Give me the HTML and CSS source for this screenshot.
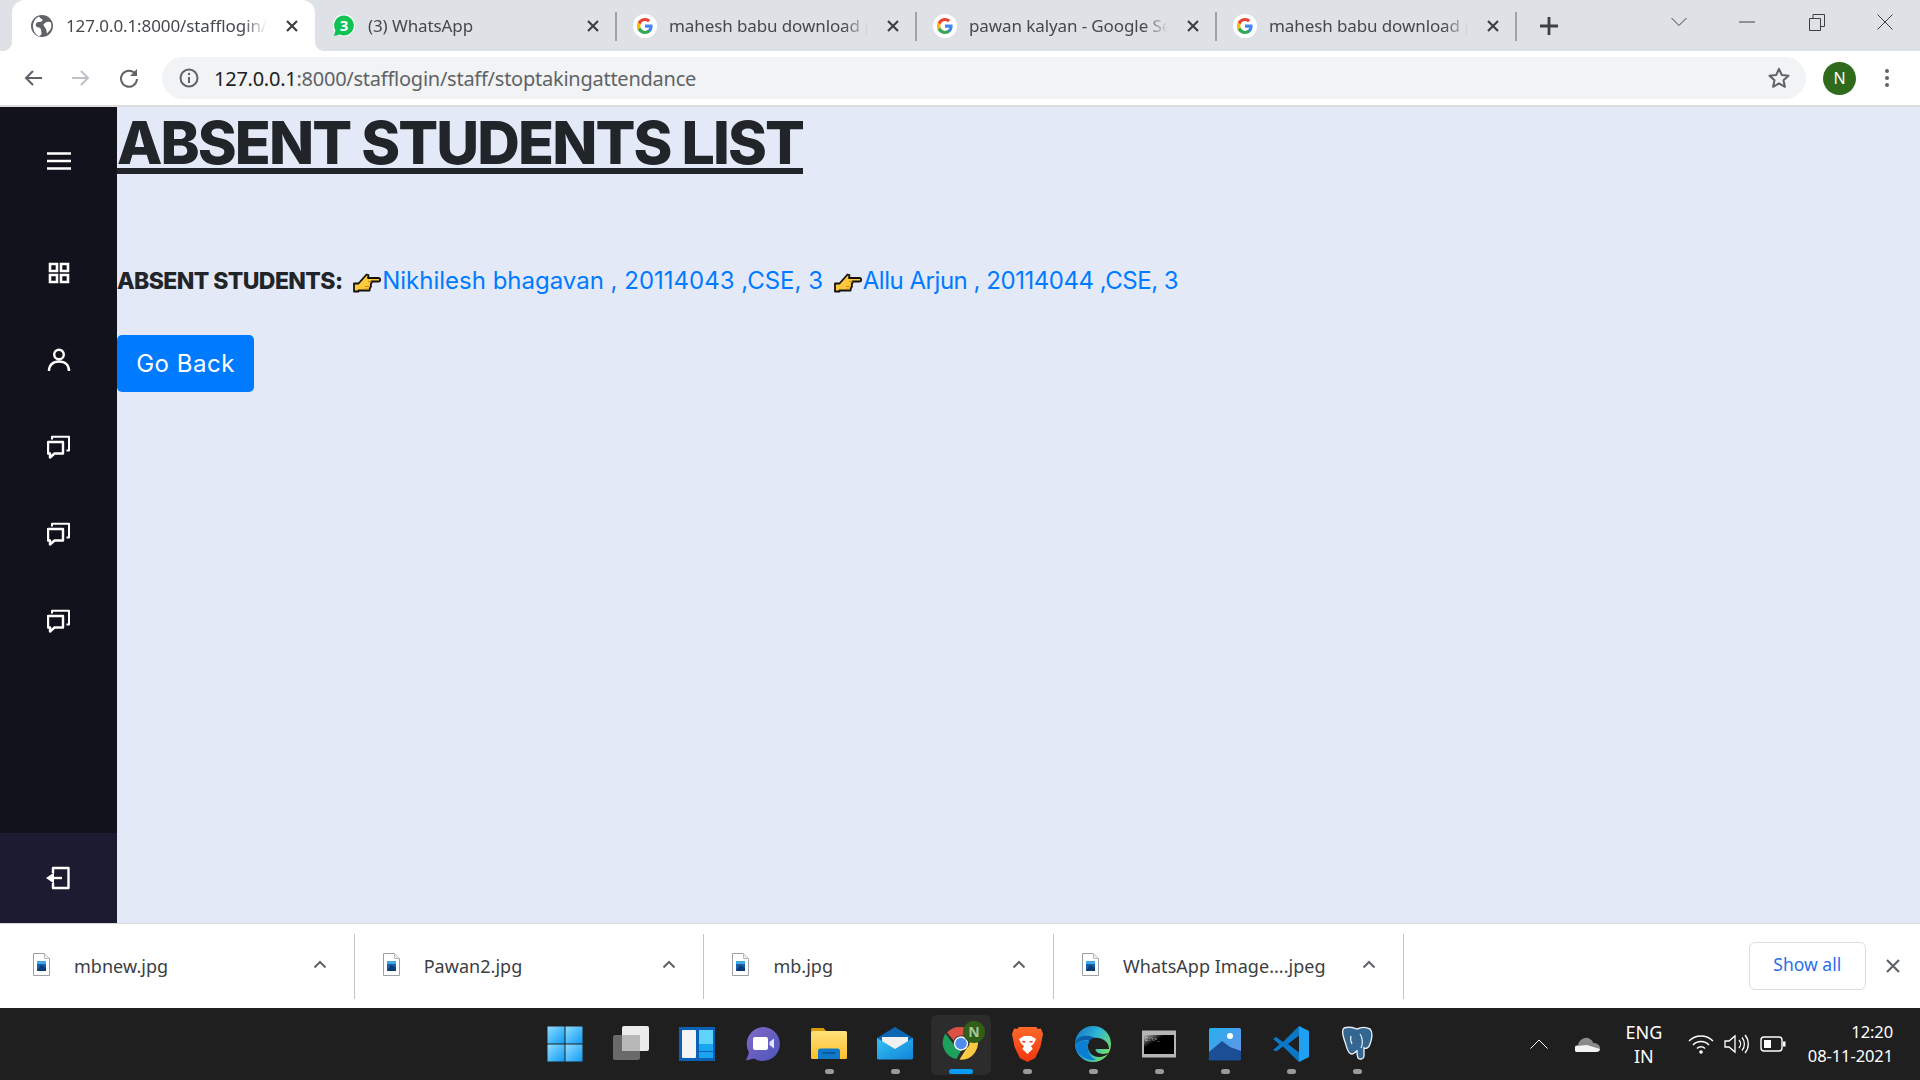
FILE: index.html
```html
<!DOCTYPE html>
<html lang="en">
<head>
<meta charset="utf-8">
<title>Absent students list</title>
<link rel="stylesheet" href="styles.css">
</head>
<body>
<svg class="defs" aria-hidden="true">
  <defs>
    <linearGradient id="gWin" x1="0" y1="0" x2="1" y2="1"><stop offset="0" stop-color="#8fdcff"/><stop offset="1" stop-color="#0f9bf5"/></linearGradient>
    <linearGradient id="gTeams" x1="0" y1="0" x2="1" y2="1"><stop offset="0" stop-color="#8169c4"/><stop offset="1" stop-color="#4d55bd"/></linearGradient>
    <linearGradient id="gFolder" x1="0" y1="0" x2="0" y2="1"><stop offset="0" stop-color="#ffe27a"/><stop offset="1" stop-color="#fdbe2b"/></linearGradient>
    <linearGradient id="gMail" x1="0" y1="0" x2="1" y2="1"><stop offset="0" stop-color="#35c0f5"/><stop offset="1" stop-color="#1184d8"/></linearGradient>
    <linearGradient id="gBrave" x1="0" y1="0" x2="0" y2="1"><stop offset="0" stop-color="#ff6a2a"/><stop offset="1" stop-color="#f0350f"/></linearGradient>
    <linearGradient id="gEdge" x1="0" y1="0" x2="1" y2="0.6"><stop offset="0" stop-color="#0f6fc6"/><stop offset="0.55" stop-color="#2fb6d6"/><stop offset="1" stop-color="#6fdc6a"/></linearGradient>
    <linearGradient id="gPhoto" x1="0" y1="0" x2="1" y2="1"><stop offset="0" stop-color="#22b0ee"/><stop offset="1" stop-color="#6f8fe8"/></linearGradient>
    <linearGradient id="gCmd" x1="0" y1="0" x2="1" y2="1"><stop offset="0" stop-color="#b9b9b9"/><stop offset="0.35" stop-color="#000"/></linearGradient>
    <symbol id="gicon" viewBox="0 0 24 24">
      <circle cx="12" cy="12" r="12" fill="#fff"/>
      <path d="M19.6 12.2c0-.6-.1-1.1-.2-1.6H12v3.1h4.3c-.2 1-.8 1.8-1.6 2.4v2h2.6c1.5-1.4 2.3-3.4 2.3-5.9z" fill="#4285f4"/>
      <path d="M12 20c2.2 0 4-.7 5.3-1.9l-2.6-2c-.7.5-1.6.8-2.7.8-2.1 0-3.9-1.4-4.5-3.3H4.8v2.1C6.1 18.2 8.8 20 12 20z" fill="#34a853"/>
      <path d="M7.5 13.6c-.3-1-.3-2.2 0-3.2V8.3H4.8c-1.1 2.2-1.1 5.2 0 7.4z" fill="#fbbc05"/>
      <path d="M12 7.1c1.2 0 2.2.4 3 1.2l2.3-2.3C15.9 4.7 14.1 4 12 4 8.8 4 6.100 5.800 4.800 8.300l2.700 2.100c.6-1.900 2.400-3.300 4.500-3.300z" fill="#ea4335"/>
    </symbol>
    <symbol id="xicon" viewBox="0 0 14 14"><path d="M2 2l10 10M12 2L2 12" fill="none" stroke="#3c4043" stroke-width="2.200"/></symbol>
    <symbol id="chaticon" viewBox="1 0 24 24"><path d="M2 7h15v11.500H8.500L4 22.500v-4H2z" fill="none" stroke="#fff" stroke-width="2.400" stroke-linejoin="round"/><path d="M6 4.500V1.800h17v13.700h-2.500" fill="none" stroke="#fff" stroke-width="2" stroke-linejoin="round"/></symbol>
    <symbol id="docicon" viewBox="0 0 17 23"><path d="M.5.500h11l5 5v17H.5z" fill="#fff" stroke="#9aa0a6"/><path d="M11.500.500v5h5" fill="#eee" stroke="#bbb"/><rect x="4" y="8" width="9" height="10" fill="#1a5fa8"/><path d="M4 18l4-6 5 3v3z" fill="#0b3c78"/><rect x="4" y="8" width="9" height="3" fill="#3fa9e8"/></symbol>
    <symbol id="upicon" viewBox="0 0 14 9"><path d="M1.500 7.500L7 2l5.500 5.500" fill="none" stroke="#5f6368" stroke-width="2"/></symbol>
    <symbol id="handicon" viewBox="0 0 28 20"><path d="M1 10.500h4.500L10 5.500 13.500 1.500l2 .5-.5 3h10.500a1.700 1.700 0 0 1 0 3.500H18.500v1.500l-.8 1.500.3 2-1 1.500-.5 2.500H5.500V18.500H1z" fill="#ffc83d" stroke="#111" stroke-width="1.800" stroke-linejoin="round"/><path d="M15 8.500h3.500M12 13.500h4M12 16h3.500" fill="none" stroke="#c98a12" stroke-width="1"/></symbol>
  </defs>
</svg>

<header class="tabstrip">
  <div class="tab active">
    <svg class="favicon" viewBox="0 0 24 24"><circle cx="12" cy="12" r="11" fill="#5f6368"/><path d="M9 2.500c1 2 3 2 3.500 3.500S10 8 8.500 8 5 10 6 12s3.500 1 4.500 2.500.5 3 1 4.500-1.500 3-3 3C5 20 3 16 3 12s2.500-8 6-9.500zM15 9c2-1.500 4-1.500 6-.5.5 2 .5 4 0 6-1.500 2-2.500 3.500-4 5-.5-2-.5-3-1-4.500S13.500 12 13.500 11 14 9.500 15 9z" fill="#fff"/></svg>
    <span class="tab-title">127.0.0.1:8000/stafflogin/s</span>
    <svg class="tab-x"><use href="#xicon"/></svg>
  </div>
  <div class="tab sep">
    <svg class="favicon" viewBox="0 0 24 24"><circle cx="12" cy="11.500" r="11" fill="#fff"/><path d="M12 1.500a10 10 0 0 0-8.600 15L2 22l5.700-1.400A10 10 0 1 0 12 1.500z" fill="#0fc254"/><text x="12" y="17" class="wa-num">3</text></svg>
    <span class="tab-title">(3) WhatsApp</span>
    <svg class="tab-x"><use href="#xicon"/></svg>
  </div>
  <div class="tab sep">
    <svg class="favicon"><use href="#gicon"/></svg>
    <span class="tab-title">mahesh babu download p</span>
    <svg class="tab-x"><use href="#xicon"/></svg>
  </div>
  <div class="tab sep">
    <svg class="favicon"><use href="#gicon"/></svg>
    <span class="tab-title">pawan kalyan - Google Se</span>
    <svg class="tab-x"><use href="#xicon"/></svg>
  </div>
  <div class="tab sep">
    <svg class="favicon"><use href="#gicon"/></svg>
    <span class="tab-title">mahesh babu download p</span>
    <svg class="tab-x"><use href="#xicon"/></svg>
  </div>
  <svg class="newtab" viewBox="0 0 18 18"><path d="M9 0v18M0 9h18" fill="none" stroke="#3c4043" stroke-width="2.800"/></svg>
  <div class="winctl">
    <div class="winbtn"><svg width="16" height="10" viewBox="0 0 16 10"><path d="M.5 1L8 8.500 15.500 1" fill="none" stroke="#3c4043"/></svg></div>
    <div class="winbtn"><svg width="16" height="2" viewBox="0 0 16 2"><path d="M0 1h16" stroke="#3c4043"/></svg></div>
    <div class="winbtn restore"><svg width="16" height="17" viewBox="0 0 16 17"><path d="M.5 4.500h11v12H.5zM4 4.500v-4h11.500v12h-4" fill="none" stroke="#3c4043"/></svg></div>
    <div class="winbtn"><svg width="16" height="16" viewBox="0 0 16 16"><path d="M.5.500l15 15M15.500.500l-15 15" fill="none" stroke="#3c4043"/></svg></div>
  </div>
</header>

<nav class="toolbar">
  <svg class="nav-ico" viewBox="0 0 20 20"><path d="M19 10H3M10 3l-7 7 7 7" fill="none" stroke="#5f6368" stroke-width="2"/></svg>
  <svg class="nav-ico" viewBox="0 0 20 20"><path d="M1 10h16M10 3l7 7-7 7" fill="none" stroke="#bdc1c6" stroke-width="2"/></svg>
  <svg class="nav-ico" viewBox="0 0 20 20"><path d="M16.500 6A8 8 0 1 0 18 11" fill="none" stroke="#5f6368" stroke-width="2"/><path d="M18 1v7h-7z" fill="#5f6368"/></svg>
  <div class="omnibox">
    <svg class="info" viewBox="0 0 20 20"><circle cx="10" cy="10" r="8.500" fill="none" stroke="#5f6368" stroke-width="2"/><path d="M10 9v6" stroke="#5f6368" stroke-width="2"/><circle cx="10" cy="6" r="1.200" fill="#5f6368"/></svg>
    <span class="url"><span class="host">127.0.0.1</span>:8000/stafflogin/staff/stoptakingattendance</span>
    <svg class="star" viewBox="0 0 24 24"><path d="M12 2.800l2.800 6.200 6.700.7-5 4.500 1.400 6.600L12 17.400l-5.900 3.400 1.400-6.600-5-4.500 6.700-.7z" fill="none" stroke="#5f6368" stroke-width="2" stroke-linejoin="round"/></svg>
  </div>
  <div class="avatar">N</div>
  <svg class="menu-dots" viewBox="0 0 4 20"><circle cx="2" cy="3" r="2" fill="#5f6368"/><circle cx="2" cy="10" r="2" fill="#5f6368"/><circle cx="2" cy="17" r="2" fill="#5f6368"/></svg>
</nav>

<div class="viewport">
  <aside class="sidebar">
    <div class="side-top">
      <svg class="burger" viewBox="0 0 24 18"><path d="M0 1.500h24M0 9h24M0 16.500h24" stroke="#fff" stroke-width="2.600"/></svg>
    </div>
    <ul class="side-list">
      <li><svg class="side-ico" viewBox="0 0 24 24"><path d="M3 3h7v7H3zM14 3h7v7h-7zM3 14h7v7H3zM14 14h7v7h-7z" fill="none" stroke="#fff" stroke-width="2.600"/></svg></li>
      <li><svg class="side-ico" viewBox="0 0 24 24"><circle cx="12" cy="6.500" r="4.800" fill="none" stroke="#fff" stroke-width="2.400"/><path d="M2 23c0-6 4-9.500 10-9.500S22 17 22 23" fill="none" stroke="#fff" stroke-width="2.400"/></svg></li>
      <li><svg class="side-ico"><use href="#chaticon"/></svg></li>
      <li><svg class="side-ico"><use href="#chaticon"/></svg></li>
      <li><svg class="side-ico"><use href="#chaticon"/></svg></li>
    </ul>
    <div class="side-bottom">
      <svg class="side-ico logout" viewBox="0 0 24 24"><path d="M7 7V2h15.500v20H7v-5" fill="none" stroke="#fff" stroke-width="2.400" stroke-linejoin="round"/><path d="M16 12H5" stroke="#fff" stroke-width="2.400"/><path d="M8 6.500v11L0 12z" fill="#fff"/></svg>
    </div>
  </aside>
  <main class="content">
    <h1 class="page-title">ABSENT STUDENTS LIST</h1>
    <p class="absent-line"><strong>ABSENT STUDENTS:</strong> <svg class="hand"><use href="#handicon"/></svg><a class="student">Nikhilesh bhagavan , 20114043 ,CSE, 3</a> <svg class="hand"><use href="#handicon"/></svg><a class="student short">Allu Arjun , 20114044 ,CSE, 3</a></p>
    <a class="btn-back">Go Back</a>
  </main>
</div>

<section class="downloads">
  <div class="dl-item"><svg class="dl-doc"><use href="#docicon"/></svg><span class="dl-name">mbnew.jpg</span><svg class="dl-up"><use href="#upicon"/></svg></div>
  <div class="dl-item"><svg class="dl-doc"><use href="#docicon"/></svg><span class="dl-name">Pawan2.jpg</span><svg class="dl-up"><use href="#upicon"/></svg></div>
  <div class="dl-item"><svg class="dl-doc"><use href="#docicon"/></svg><span class="dl-name">mb.jpg</span><svg class="dl-up"><use href="#upicon"/></svg></div>
  <div class="dl-item"><svg class="dl-doc"><use href="#docicon"/></svg><span class="dl-name">WhatsApp Image....jpeg</span><svg class="dl-up"><use href="#upicon"/></svg></div>
  <div class="show-all">Show all</div>
  <svg class="dl-close" viewBox="0 0 14 14"><path d="M1 1l12 12M13 1L1 13" fill="none" stroke="#5f6368" stroke-width="2.200"/></svg>
</section>

<footer class="taskbar">
  <div class="task-center">
    <div class="task"><svg class="task-ico" viewBox="0 0 36 36"><g fill="url(#gWin)"><rect x="0.500" y="0.500" width="17" height="17"/><rect x="18.500" y="0.500" width="17" height="17"/><rect x="0.500" y="18.500" width="17" height="17"/><rect x="18.500" y="18.500" width="17" height="17"/></g></svg></div>
    <div class="task"><svg class="task-ico" viewBox="0 0 36 36"><rect x="0" y="9" width="27" height="25" rx="2" fill="#6a6a6a"/><rect x="9" y="0" width="27" height="25" rx="2" fill="#ececec"/><rect x="9" y="9" width="18" height="16" fill="#b8b8b8"/></svg></div>
    <div class="task"><svg class="task-ico" viewBox="0 0 36 36"><rect width="36" height="34" x="0" y="1" fill="#0b62b5"/><rect x="3" y="4" width="14" height="28" rx="1" fill="#f4f4f4"/><rect x="20" y="4" width="14" height="14" fill="#5fd3fb"/><rect x="20" y="18" width="14" height="7" fill="#19a5f0"/><rect x="20" y="26" width="14" height="6" fill="#19a5f0"/></svg></div>
    <div class="task"><svg class="task-ico" viewBox="0 0 36 36"><path d="M18 1a17 17 0 1 1-9 31.500L1 34.500l3-8A17 17 0 0 1 18 1z" fill="url(#gTeams)"/><rect x="8" y="11" width="15" height="13" rx="2" fill="#fff"/><path d="M24.500 16l4.500-3.500v10L24.500 19z" fill="#dfe3fa"/></svg></div>
    <div class="task on"><svg class="task-ico" viewBox="0 0 36 36"><path d="M0 3a1.500 1.500 0 0 1 1.500-1h11l3 3.500H0z" fill="#d99a08"/><rect x="0" y="5" width="36" height="28" rx="1.500" fill="url(#gFolder)"/><path d="M7 33v-8a2.500 2.500 0 0 1 2.500-2.500h17A2.500 2.500 0 0 1 29 25v8z" fill="#0f79c9"/><path d="M11.500 27h13" stroke="#0a4f8c" stroke-width="1.500"/></svg></div>
    <div class="task on"><svg class="task-ico" viewBox="0 0 36 36"><path d="M0 12L18 1l18 11v6H0z" fill="#0a67b5"/><path d="M5 11h26v10L18 27 5 21z" fill="#f0f0f0"/><path d="M0 12l18 11 18-11v20a1.500 1.500 0 0 1-1.500 1.500h-33A1.500 1.500 0 0 1 0 32z" fill="url(#gMail)"/></svg></div>
    <div class="task tile active-app"><svg class="task-ico chrome" viewBox="0 0 44 44">
      <path d="M20 6a16.500 16.500 0 0 1 14.300 8.200L20 14.500a8 8 0 0 0-7.300 5L6 11.500A16.500 16.500 0 0 1 20 6z" fill="#dd5144"/>
      <path d="M4.500 12.500L12 22.500a8 8 0 0 0 8.500 6l-5 9.500A16.500 16.500 0 0 1 4.500 12.500z" fill="#1da15c"/>
      <path d="M35 14.500a16.500 16.500 0 0 1-16.500 24l7-11a8 8 0 0 0 .5-12.500z" fill="#fbc944"/>
      <circle cx="20" cy="22.500" r="7.200" fill="#fff"/><circle cx="20" cy="22.500" r="5.800" fill="#4f8cf0"/>
      <circle cx="33" cy="11" r="11" fill="#2f5f19"/><text x="33" y="15.500" class="badge-n">N</text>
    </svg></div>
    <div class="task on"><svg class="task-ico brave" viewBox="0 0 36 36" preserveAspectRatio="none"><path d="M8 1h20l2 2 3.500-.5L36 8l-3 13-6 11-9 4-9-4-6-11L0 8l2.500-5.500L6 3z" fill="url(#gBrave)"/><path d="M8 13l6-3h8l6 3-3 5-3 2 2 3-6 5-6-5 2-3-3-2z" fill="#fff"/><path d="M12 15.500l3.500.5M24 15.500l-3.500.5" stroke="#f0350f" stroke-width="1.500"/></svg></div>
    <div class="task on"><svg class="task-ico" viewBox="0 0 36 36"><circle cx="18" cy="18" r="18" fill="url(#gEdge)"/><path d="M0 19C1 10 9 9 14 10c7 1 11 5 11 10H16c0-3-2-6-5-6-6 0-11 4-11 5z" fill="#0d5fa8"/><path d="M34 23c0-8-8-12-15-11-5 1-7 6-6 10 1 6 6 9 11 9 4 0 8-2 10-4-3 1-10 2-13-2-1-1-1-2 1-2z" fill="#1f1f1f"/><path d="M14 16c-3 6 0 15 7 18-9 1-18-4-21-13 2-5 9-8 14-5z" fill="#0b7fd4"/></svg></div>
    <div class="task on"><svg class="task-ico" viewBox="0 0 36 30"><rect width="34" height="27" x="1" y="1.500" fill="#b5b5b5"/><rect width="30" height="19" x="3" y="6" fill="url(#gCmd)"/><text x="4" y="12" class="cmd-txt">C:\&gt;_</text></svg></div>
    <div class="task on"><svg class="task-ico" viewBox="0 0 36 36"><rect x="2" y="2" width="32" height="32" rx="1.500" fill="url(#gPhoto)"/><circle cx="23" cy="10" r="3" fill="#fff"/><path d="M2 26l13-11 8 6 11 4v8a1.500 1.500 0 0 1-1.500 1.500h-29A1.500 1.500 0 0 1 2 32z" fill="#1a4f96"/></svg></div>
    <div class="task on"><svg class="task-ico" viewBox="0 0 36 36"><path d="M26 0l10 5v26l-10 5z" fill="#1fa0f2"/><path d="M26 0L10 16 3 11 0 13l6.500 5.500L0 24l3 1.500 7-5 16 15.500v-9.500L15 18 26 9.500z" fill="#0a78c7"/></svg></div>
    <div class="task on"><svg class="task-ico" viewBox="0 0 36 36"><path d="M5 2c6-2 10 0 13 1 4-2 9-2 13 0 3 3 2 10 0 15-1 4-4 5-6 4v8c0 3-4 4-6 2-1-2-1-5-1-7-2 1-3 3-5 3-4 0-5-6-6-9C6 15 1 5 5 2z" fill="#336791" stroke="#e8edf2" stroke-width="1.400"/><path d="M21 8c3 4 3 10 1 14M12 10c-1 3 0 6 1 8" fill="none" stroke="#e8edf2" stroke-width="1.200"/></svg></div>
  </div>
  <div class="tray">
    <svg class="tray-caret" viewBox="0 0 18 10"><path d="M.5 9.500L9 1l8.500 8.500" fill="none" stroke="#fff"/></svg>
    <svg class="tray-cloud" viewBox="0 0 26 17"><path d="M3 16a3.500 3.500 0 0 1 0-7c1-5 6-8 10-7 3 1 5 3 5 5 4 0 7 2 7 5s-2 4-4 4z" fill="#8a8a8a"/><path d="M3 16a3 3 0 0 1-1-6l10-1 13 4c0 2-2 3-4 3z" fill="#f2f2f2"/></svg>
    <div class="tray-lang"><span>ENG</span><span>IN</span></div>
    <svg class="tray-wifi" viewBox="0 0 26 20"><path d="M1 7a17 17 0 0 1 24 0M5 11a11 11 0 0 1 16 0M9 14.500a5.500 5.500 0 0 1 8 0" fill="none" stroke="#fff" stroke-width="1.500"/><circle cx="13" cy="18" r="1.800" fill="#fff"/></svg>
    <svg class="tray-vol" viewBox="0 0 26 20"><path d="M1 7h4l6-5v16l-6-5H1z" fill="none" stroke="#fff" stroke-width="1.300"/><path d="M15 6a6 6 0 0 1 0 8M18 3.500a10 10 0 0 1 0 13M21 1a14 14 0 0 1 0 18" fill="none" stroke="#fff" stroke-width="1.300"/></svg>
    <svg class="tray-batt" viewBox="0 0 26 16"><rect x="1" y="1" width="21" height="14" rx="3" fill="none" stroke="#fff" stroke-width="1.400"/><rect x="4" y="4" width="7" height="8" fill="#fff"/><rect x="23" y="5.500" width="2.500" height="5" fill="#fff"/></svg>
    <div class="tray-clock"><span>12:20</span><span>08-11-2021</span></div>
  </div>
</footer>
</body>
</html>
```
FILE: styles.css
```css
* { box-sizing: border-box; }
html, body { margin: 0; padding: 0; height: 100%; }
body {
  width: 1920px;
  height: 1080px;
  overflow: hidden;
  display: flex;
  flex-direction: column;
  font-family: "Noto Sans", "Open Sans", sans-serif;
  background: #fff;
}
.defs { display: block; width: 0; height: 0; flex: none; }

/* tab strip */
.tabstrip {
  flex: none;
  height: 51px;
  display: flex;
  padding-left: 12px;
  background: #dee1e6;
}
.tab {
  position: relative;
  flex: none;
  width: 300px;
  display: flex;
  align-items: center;
  padding: 0 15px 0 17px;
  font-size: 17px;
  letter-spacing: -.1px;
  color: #45484d;
}
.tab.sep + .tab.sep { padding-left: 18px; }
.tab.active {
  width: 303px;
  padding-left: 18px;
  padding-right: 16px;
  background: #fff;
  border-radius: 13px 13px 0 0;
}
.tab.active::before,
.tab.active::after {
  content: "";
  position: absolute;
  bottom: 0;
  width: 10px;
  height: 10px;
}
.tab.active::before { left: -10px; background: radial-gradient(circle at 0 0, transparent 10px, #fff 10.5px); }
.tab.active::after { right: -10px; background: radial-gradient(circle at 100% 0, transparent 10px, #fff 10.5px); }
.tab.sep::after {
  content: "";
  position: absolute;
  right: -2px;
  top: 12px;
  width: 2px;
  height: 29px;
  background: #a0a4a9;
}
.favicon { flex: none; width: 24px; height: 24px; margin-right: 12px; }
.wa-num { font: 700 15px "Noto Sans", sans-serif; fill: #fff; text-anchor: middle; }
.tab-title {
  flex: 1;
  min-width: 0;
  white-space: nowrap;
  overflow: hidden;
  -webkit-mask-image: linear-gradient(90deg, #000 calc(100% - 30px), transparent calc(100% - 6px));
  mask-image: linear-gradient(90deg, #000 calc(100% - 30px), transparent calc(100% - 6px));
}
.tab-x { flex: none; width: 14px; height: 14px; margin-left: 12px; }
.newtab { flex: none; width: 18px; height: 18px; margin: 17px 0 0 25px; }
.winctl { display: flex; margin-left: auto; padding-right: 1px; height: 44px; }
.winbtn { width: 68px; height: 44px; display: flex; align-items: center; justify-content: center; }
.winbtn.restore { margin-left: 2px; }

/* toolbar */
.toolbar {
  flex: none;
  height: 56px;
  display: flex;
  align-items: center;
  padding: 0 0 0 23px;
  background: #fff;
  border-bottom: 2px solid #dcdcdc;
}
.nav-ico { flex: none; width: 20px; height: 20px; margin-right: 28px; }
.omnibox {
  flex: none;
  width: 1644px;
  height: 42px;
  margin-left: -5px;
  border-radius: 21px;
  background: #f1f3f4;
  display: flex;
  align-items: center;
  padding: 0 15px 0 17px;
}
.info { flex: none; width: 20px; height: 20px; margin-right: 15px; }
.url { flex: 1; font-size: 20px; letter-spacing: -.25px; color: #5f6368; white-space: nowrap; }
.host { color: #202124; }
.star { flex: none; width: 24px; height: 24px; }
.avatar {
  flex: none;
  width: 33px;
  height: 33px;
  margin-left: 17px;
  border-radius: 50%;
  background: #2f6a1d;
  color: #fff;
  font-size: 16px;
  line-height: 33px;
  text-align: center;
}
.menu-dots { flex: none; width: 4px; height: 20px; margin-left: 29px; }

/* page */
.viewport { flex: 1; min-height: 0; display: flex; background: #e4e9f7; }
.sidebar { flex: none; width: 117px; display: flex; flex-direction: column; background: #11121c; }
.side-top { height: 108px; display: flex; align-items: center; justify-content: center; }
.burger { width: 24px; height: 18px; }
.side-list { flex: 1; list-style: none; margin: 0; padding: 14px 0 0; }
.side-list li { height: 87px; display: flex; align-items: center; justify-content: center; }
.side-ico { width: 24px; height: 24px; }
.logout { margin-left: -2px; }
.side-bottom { flex: none; height: 90px; display: flex; align-items: center; justify-content: center; background: #1d1b31; }
.content { flex: 1; min-width: 0; color: #212529; font-family: Inter, "Liberation Sans", sans-serif; }
.page-title {
  margin: 0;
  font-size: 59px;
  line-height: 72px;
  font-weight: 800;
  letter-spacing: -1.9px;
  text-decoration: underline;
  text-decoration-thickness: 6px;
  text-underline-offset: 4px;
}
.absent-line { margin: 84px 0 0; font-size: 24px; line-height: 36px; white-space: nowrap; }
.absent-line strong { font-size: 23px; font-weight: 800; letter-spacing: -.6px; }
.hand { width: 28px; height: 20px; vertical-align: -4px; margin: 0 1px 0 4px; }
.student { color: #007bff; }
.student.short { letter-spacing: -.47px; }
.btn-back {
  display: flex;
  align-items: center;
  justify-content: center;
  width: 137px;
  height: 57px;
  margin-top: 36px;
  border-radius: 5px;
  background: #007bff;
  color: #fff;
  font-size: 24px;
  letter-spacing: .5px;
}

/* downloads */
.downloads {
  flex: none;
  height: 85px;
  display: flex;
  align-items: center;
  padding-left: 5px;
  background: #fff;
  border-top: 1px solid #d8d8d8;
}
.dl-item {
  flex: none;
  width: 349.7px;
  height: 65px;
  display: flex;
  align-items: center;
  padding-left: 28px;
  border-right: 1.5px solid #c4c4c4;
  color: #3c4043;
  font-size: 18px;
  letter-spacing: .03px;
}
.dl-doc { flex: none; width: 17px; height: 23px; margin: -4px 24px 0 0; }
.dl-name { flex: 1; white-space: nowrap; }
.dl-up { flex: none; width: 14px; height: 9px; margin: -4px 27px 0 0; }
.show-all {
  flex: none;
  width: 117px;
  height: 48px;
  margin-left: 345px;
  padding-bottom: 4px;
  display: flex;
  align-items: center;
  justify-content: center;
  border: 1px solid #dadce0;
  border-radius: 6px;
  color: #2a6fe8;
  font-size: 17.5px;
}
.dl-close { flex: none; width: 14px; height: 14px; margin-left: 20px; }

/* taskbar */
.taskbar {
  flex: none;
  height: 72px;
  display: grid;
  grid-template-columns: 1fr auto 1fr;
  background: #1f1f1f;
  color: #fff;
}
.task-center { grid-column: 2; display: flex; padding-left: 2px; }
.task { position: relative; width: 66px; height: 72px; display: flex; align-items: center; justify-content: center; }
.task-ico { width: 36px; height: 36px; }
.task-ico.brave { width: 31px; }
.task.on::after {
  content: "";
  position: absolute;
  left: 29px;
  bottom: 6px;
  width: 9px;
  height: 5px;
  border-radius: 3px;
  background: #9a9a9a;
}
.tile::before {
  content: "";
  position: absolute;
  left: 3px;
  top: 7px;
  width: 60px;
  height: 60px;
  border-radius: 6px;
  background: #2c2c2c;
}
.tile svg { position: relative; }
.chrome { width: 44px; height: 44px; margin: -2px 0 0 4px; }
.active-app::after {
  content: "";
  position: absolute;
  left: 21px;
  bottom: 6px;
  width: 24px;
  height: 5px;
  border-radius: 3px;
  background: #0a9bf5;
}
.badge-n { font: 700 14px "Noto Sans", sans-serif; fill: #a7c79a; text-anchor: middle; }
.cmd-txt { font: 5px "Liberation Mono", monospace; fill: #ddd; }
.tray { grid-column: 3; justify-self: end; display: flex; align-items: center; padding-right: 27px; font-size: 16.5px; }
.tray-caret { width: 18px; height: 10px; }
.tray-cloud { width: 26px; height: 17px; margin-left: 27px; }
.tray-lang { width: 40px; margin-left: 23px; display: flex; flex-direction: column; align-items: center; font-size: 18px; line-height: 24px; }
.tray-wifi { width: 26px; height: 20px; margin-left: 24px; }
.tray-vol { width: 26px; height: 20px; margin-left: 10px; }
.tray-batt { width: 26px; height: 16px; margin-left: 10px; }
.tray-clock { margin-left: 22px; display: flex; flex-direction: column; align-items: flex-end; letter-spacing: -.1px; line-height: 24px; }
```
